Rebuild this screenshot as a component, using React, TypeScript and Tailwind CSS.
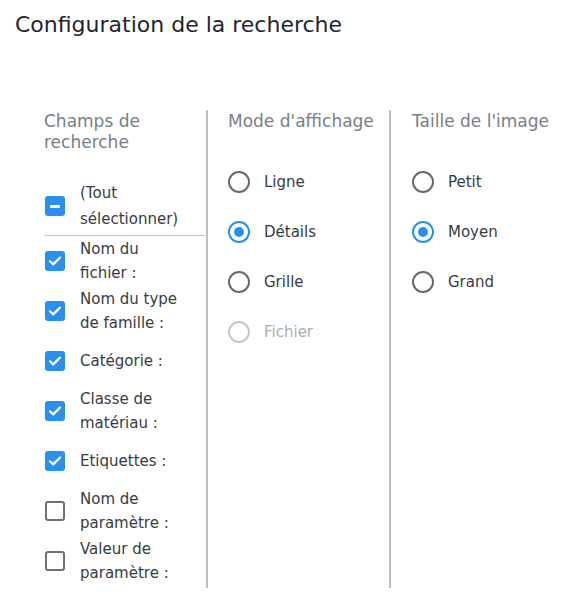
import { useState } from 'react';

const FONT = "font-['DejaVu_Sans',_'Noto_Sans',_sans-serif]";

const fields = [
  { label: 'Nom du fichier :', checked: true },
  { label: 'Nom du type de famille :', checked: true },
  { label: 'Catégorie :', checked: true },
  { label: 'Classe de matériau :', checked: true },
  { label: 'Etiquettes :', checked: true },
  { label: 'Nom de paramètre :', checked: false },
  { label: 'Valeur de paramètre :', checked: false },
];

function Box({ state }: { state: 'on' | 'off' | 'mixed' }) {
  if (state === 'off') {
    return <span className="h-5 w-5 shrink-0 rounded-[3px] border-2 border-[#6b717b] bg-white" />;
  }
  return (
    <span className="flex h-5 w-5 shrink-0 items-center justify-center rounded-[3px] bg-[#2990f0]">
      {state === 'on' ? (
        <svg viewBox="0 0 20 20" className="h-5 w-5" fill="none">
          <path d="M5 10.3l3.2 3.1L15 6.6" stroke="white" strokeWidth="2.2" strokeLinecap="round" strokeLinejoin="round" />
        </svg>
      ) : (
        <span className="h-[3px] w-[10px] rounded-[1px] bg-white" />
      )}
    </span>
  );
}

function Radio({ label, value, selected, disabled, onPick }: { label: string; value: string; selected: string; disabled?: boolean; onPick: (v: string) => void }) {
  const on = selected === value;
  return (
    <button
      type="button"
      disabled={disabled}
      onClick={() => onPick(value)}
      className="flex h-[50px] items-center gap-[14px] text-left"
    >
      <span
        className={
          'flex h-[22px] w-[22px] shrink-0 items-center justify-center rounded-full border-2 ' +
          (disabled ? 'border-[#c6c8cc]' : on ? 'border-[#2990f0]' : 'border-[#646b75]')
        }
      >
        {on && <span className="h-[10px] w-[10px] rounded-full bg-[#2990f0]" />}
      </span>
      <span className={'text-[15px] ' + (disabled ? 'text-[#a9aeb5]' : 'text-[#373c44]')}>{label}</span>
    </button>
  );
}

export default function App() {
  const [checks, setChecks] = useState(fields.map((f) => f.checked));
  const [mode, setMode] = useState('details');
  const [size, setSize] = useState('moyen');

  const all = checks.every(Boolean);
  const none = checks.every((c) => !c);
  const master = all ? 'on' : none ? 'off' : 'mixed';

  return (
    <div className={`${FONT} min-h-screen bg-white`}>
      <h1 className="px-[15px] pt-[9px] text-[22px] leading-[32px] text-[#1f2630]">Configuration de la recherche</h1>

      <div className="mt-[69px] flex pl-[24px]">
        {/* champs */}
        <div className="w-[184px] border-r-2 border-[#bcc0c5] pb-[2px] pl-[20px] pt-[1px]">
          <div className="text-[17px] leading-[21px] text-[#787f88]">
            Champs de
            <br />
            recherche
          </div>
          <div className="mt-[27px] border-b border-[#c3c6ca] pb-[3px]">
            <button
              type="button"
              onClick={() => setChecks(checks.map(() => !all))}
              className="flex h-[52px] items-center gap-[15px] pl-[1px] text-left"
            >
              <Box state={master} />
              <span className="text-[15px] leading-[26px] text-[#373c44]">
                (Tout
                <br />
                sélectionner)
              </span>
            </button>
          </div>
          {fields.map((f, i) => (
            <button
              key={f.label}
              type="button"
              onClick={() => setChecks(checks.map((c, j) => (j === i ? !c : c)))}
              className="flex h-[50px] w-full items-center gap-[15px] pl-[1px] text-left"
            >
              <Box state={checks[i] ? 'on' : 'off'} />
              <span className="max-w-[104px] text-[15px] leading-[24px] text-[#373c44]">{f.label}</span>
            </button>
          ))}
        </div>

        {/* mode */}
        <div className="w-[183px] border-r-2 border-[#bcc0c5] pl-[20px] pt-[1px]">
          <div className="text-[17px] leading-[21px] text-[#787f88]">Mode d'affichage</div>
          <div className="mt-[25px] flex flex-col">
            <Radio label="Ligne" value="ligne" selected={mode} onPick={setMode} />
            <Radio label="Détails" value="details" selected={mode} onPick={setMode} />
            <Radio label="Grille" value="grille" selected={mode} onPick={setMode} />
            <Radio label="Fichier" value="fichier" selected={mode} onPick={setMode} disabled />
          </div>
        </div>

        {/* taille */}
        <div className="flex-1 pl-[21px] pt-[1px]">
          <div className="text-[17px] leading-[21px] text-[#787f88]">Taille de l'image</div>
          <div className="mt-[25px] flex flex-col">
            <Radio label="Petit" value="petit" selected={size} onPick={setSize} />
            <Radio label="Moyen" value="moyen" selected={size} onPick={setSize} />
            <Radio label="Grand" value="grand" selected={size} onPick={setSize} />
          </div>
        </div>
      </div>
    </div>
  );
}
